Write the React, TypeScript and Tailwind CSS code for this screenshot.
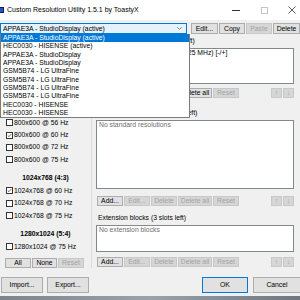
import React from "react";

const displays = [
  "APPAE3A - StudioDisplay (active)",
  "HEC0030 - HISENSE (active)",
  "APPAE3A - StudioDisplay",
  "APPAE3A - StudioDisplay",
  "GSM5B74 - LG UltraFine",
  "GSM5B74 - LG UltraFine",
  "GSM5B74 - LG UltraFine",
  "GSM5B74 - LG UltraFine",
  "HEC0030 - HISENSE",
  "HEC0030 - HISENSE",
];

type Item = { head?: string; label?: string; checked?: boolean };

// only the rows below the open dropdown are drawn
const established: Item[] = [
  { label: "800x600 @ 56 Hz" },
  { label: "800x600 @ 60 Hz", checked: true },
  { label: "800x600 @ 72 Hz" },
  { label: "800x600 @ 75 Hz" },
  { head: "1024x768 (4:3)" },
  { label: "1024x768 @ 60 Hz", checked: true },
  { label: "1024x768 @ 70 Hz" },
  { label: "1024x768 @ 75 Hz" },
  { head: "1280x1024 (5:4)" },
  { label: "1280x1024 @ 75 Hz" },
];

function Btn({ children, className = "", off = false, main = false }: { children: React.ReactNode; className?: string; off?: boolean; main?: boolean }) {
  const look = off
    ? "bg-[#d6d6d6] border-[#c8c8c8] text-[#a3a3a3]"
    : main
    ? "bg-[#e1e1e1] border-[#0078d7] text-black"
    : "bg-[#e1e1e1] border-[#adadad] text-black";
  return <div className={`flex items-center justify-center border shrink-0 ${look} ${className}`}>{children}</div>;
}

function Check({ on }: { on?: boolean }) {
  return (
    <div className="w-[7px] h-[7px] border border-[#333333] bg-white shrink-0 flex items-center justify-center">
      {on && (
        <svg width="7" height="7" viewBox="0 0 7 7">
          <path d="M1.2 3.6 L2.8 5.1 L5.8 1.6" fill="none" stroke="#222" strokeWidth="0.9" />
        </svg>
      )}
    </div>
  );
}

function Arrows() {
  return (
    <div className="flex gap-[1px] ml-auto">
      <Btn off className="w-[11px] h-[10px]">↑</Btn>
      <Btn off className="w-[11px] h-[10px]">↓</Btn>
    </div>
  );
}

function ListActions({ more }: { more?: boolean }) {
  return (
    <div className="flex h-[10px] gap-[1px] pl-[1px]">
      <Btn className="w-[26px] h-[10px]">Add...</Btn>
      <Btn off={!more} className="w-[26px] h-[10px]">Edit...</Btn>
      <Btn off={!more} className="w-[26px] h-[10px]">Delete</Btn>
      <Btn off={!more} className="w-[34px] h-[10px]">Delete all</Btn>
      <Btn off className="w-[26px] h-[10px]">Reset</Btn>
      <Arrows />
    </div>
  );
}

export default function App() {
  return (
    <div className="relative w-[300px] h-[300px] overflow-hidden bg-[#f0f0f0] text-[6.8px] leading-[8px] text-black" style={{ fontFamily: '"Liberation Sans", Arial, sans-serif' }}>
      {/* title bar */}
      <div className="h-[20px] bg-white flex items-center">
        <div className="w-[5px] h-[6px] bg-[#2456c9] border border-[#0b1f5c] ml-[-1px]" />
        <span className="ml-[3px] text-[7px]">Custom Resolution Utility 1.5.1 by ToastyX</span>
        <div className="ml-auto mr-[-6px] flex h-full">
          <div className="w-[28px] flex items-center justify-center">
            <div className="w-[8px] h-[1px] bg-[#333]" />
          </div>
          <div className="w-[28px] flex items-center justify-center">
            <div className="w-[7px] h-[7px] border border-[#c4c4c4]" />
          </div>
          <div className="w-[28px] flex items-center justify-center">
            <svg width="8" height="8" viewBox="0 0 8 8">
              <path d="M0.5 0.5 L7.5 7.5 M7.5 0.5 L0.5 7.5" stroke="#333" strokeWidth="0.8" />
            </svg>
          </div>
        </div>
      </div>

      {/* display selector row */}
      <div className="flex mt-[3px] h-[11px]">
        <div className="w-[189px] h-[11px] border border-[#0078d7] bg-[#e5f1fb] flex items-center pl-[2px] pr-[4px]">
          <span>APPAE3A - StudioDisplay (active)</span>
          <svg className="ml-auto" width="5" height="3" viewBox="0 0 5 3">
            <path d="M0.3 0.3 L2.5 2.5 L4.7 0.3" fill="none" stroke="#555" strokeWidth="0.7" />
          </svg>
        </div>
        <div className="flex gap-[1px] ml-[4px]">
          <Btn className="w-[27px] h-[11px]">Edit...</Btn>
          <Btn className="w-[26px] h-[11px]">Copy</Btn>
          <Btn off className="w-[26px] h-[11px]">Paste</Btn>
          <Btn className="w-[27px] h-[11px]">Delete</Btn>
        </div>
      </div>

      {/* main area */}
      <div className="flex h-[234px]">
        {/* established resolutions */}
        <div className="w-[92px] flex flex-col border-r border-[#dcdcdc]">
          <div className="h-[14px]" />
          <div className="h-[205px] flex flex-col justify-end">
            {established.map((it, i) =>
              it.head ? (
                <div key={i} className="h-[19px] pt-[4.6px] flex items-center justify-center font-bold shrink-0">
                  {it.head}
                </div>
              ) : (
                <div key={i} className="h-[12.3px] flex items-center gap-[1px] pl-[6px] shrink-0">
                  <Check on={it.checked} />
                  <span>{it.label}</span>
                </div>
              )
            )}
          </div>
          <div className="flex gap-[1px] mt-[5px] ml-[5px]">
            <Btn className="w-[26px] h-[10px]">All</Btn>
            <Btn className="w-[25px] h-[10px]">None</Btn>
            <Btn off className="w-[26px] h-[10px]">Reset</Btn>
          </div>
        </div>

        {/* right side */}
        <div className="w-[198px] ml-[4px] flex flex-col">
          <div className="h-[14px] flex items-center pl-[2px]">Detailed resolutions (3 slots left)</div>
          <div className="h-[36px] bg-white border border-[#828790] pl-[2px] whitespace-nowrap overflow-hidden">
            5120x2880 @ 60.00 Hz (938.25 MHz) [-/+]
          </div>
          <div className="mt-[4px]">
            <ListActions more />
          </div>

          <div className="mt-[8px] h-[14px] flex items-center pl-[2px]">Standard resolutions (8 slots left)</div>
          <div className="h-[69px] bg-white border border-[#828790] pl-[2px] text-[#6d6d6d]">No standard resolutions</div>
          <div className="mt-[7px]">
            <ListActions />
          </div>

          <div className="mt-[5px] h-[14px] flex items-center pl-[2px]">Extension blocks (3 slots left)</div>
          <div className="h-[27px] bg-white border border-[#828790] pl-[2px] text-[#6d6d6d]">No extension blocks</div>
          <div className="mt-[5px]">
            <ListActions />
          </div>
        </div>
      </div>

      {/* bottom buttons */}
      <div className="flex mt-[9px] h-[16px]">
        <Btn className="w-[42px] h-[16px] ml-[1px]">Import...</Btn>
        <Btn className="w-[42px] h-[16px] ml-[4px]">Export...</Btn>
        <Btn main className="w-[46px] h-[16px] ml-auto">OK</Btn>
        <Btn className="w-[48px] h-[16px] ml-[5px] mr-[-1px]">Cancel</Btn>
      </div>

      <div className="absolute left-0 bottom-0 w-full h-[4px] bg-gradient-to-r from-[#7c858e] via-[#9aa3ab] to-[#6e7781]" />

      {/* open dropdown */}
      <div className="absolute left-0 top-[34px] w-[190px] h-[84px] bg-white border border-[#7a7a7a] border-t-0">
        {displays.map((d, i) => (
          <div key={i} className={`h-[8.3px] pl-[2px] flex items-center ${i === 0 ? "bg-[#0078d7] text-white" : ""}`}>
            {d}
          </div>
        ))}
      </div>
    </div>
  );
}
